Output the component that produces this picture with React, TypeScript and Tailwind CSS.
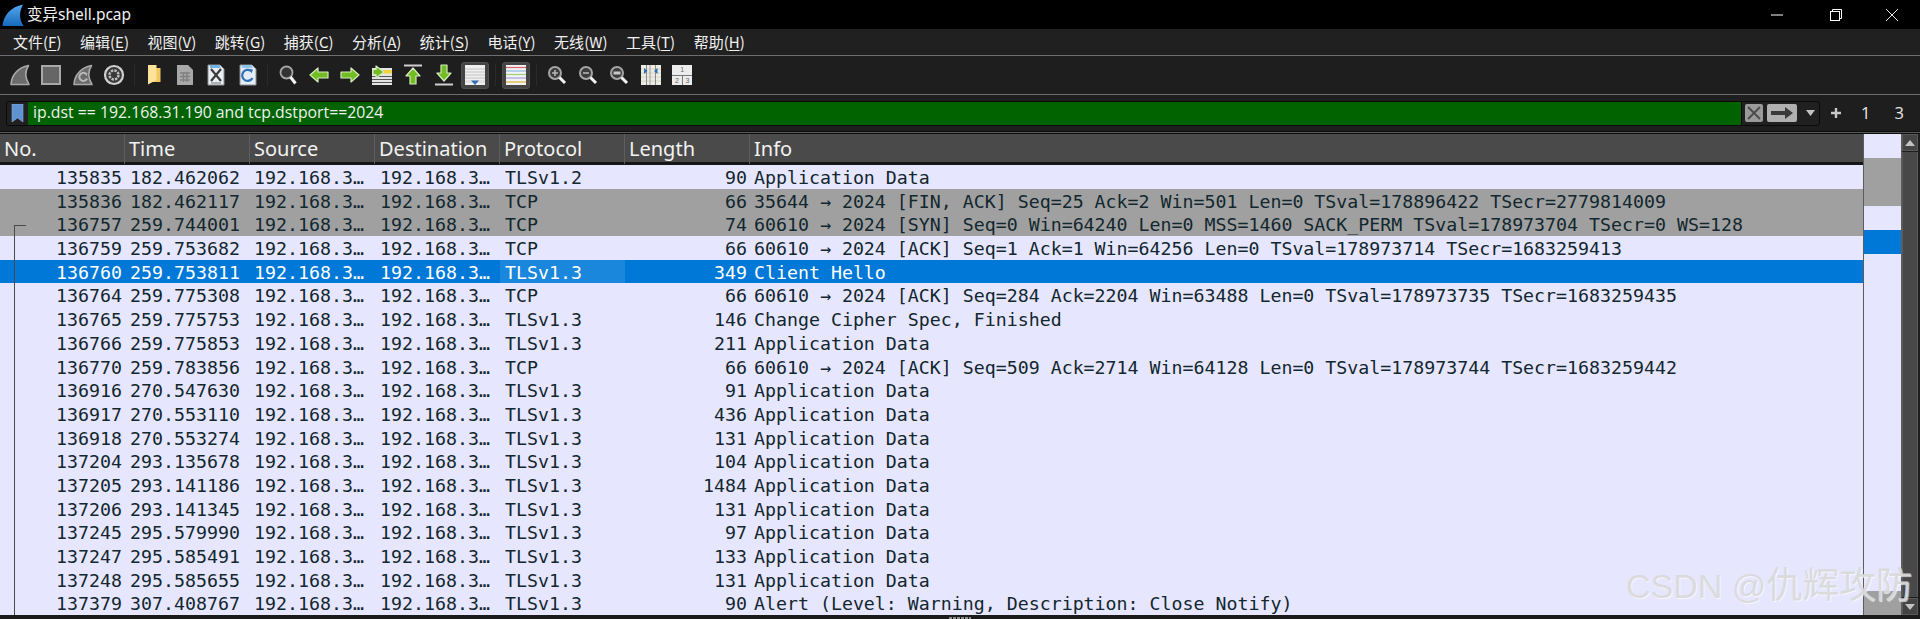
import React from 'react';

type Packet = { no: string; time: string; proto: string; len: string; info: string; tone?: 'gray' | 'selected' };

const appData = 'Application Data';

const packets: Packet[] = [
  { no: '135835', time: '182.462062', proto: 'TLSv1.2', len: '90', info: appData },
  { no: '135836', time: '182.462117', proto: 'TCP', len: '66', info: '35644 → 2024 [FIN, ACK] Seq=25 Ack=2 Win=501 Len=0 TSval=178896422 TSecr=2779814009', tone: 'gray' },
  { no: '136757', time: '259.744001', proto: 'TCP', len: '74', info: '60610 → 2024 [SYN] Seq=0 Win=64240 Len=0 MSS=1460 SACK_PERM TSval=178973704 TSecr=0 WS=128', tone: 'gray' },
  { no: '136759', time: '259.753682', proto: 'TCP', len: '66', info: '60610 → 2024 [ACK] Seq=1 Ack=1 Win=64256 Len=0 TSval=178973714 TSecr=1683259413' },
  { no: '136760', time: '259.753811', proto: 'TLSv1.3', len: '349', info: 'Client Hello', tone: 'selected' },
  { no: '136764', time: '259.775308', proto: 'TCP', len: '66', info: '60610 → 2024 [ACK] Seq=284 Ack=2204 Win=63488 Len=0 TSval=178973735 TSecr=1683259435' },
  { no: '136765', time: '259.775753', proto: 'TLSv1.3', len: '146', info: 'Change Cipher Spec, Finished' },
  { no: '136766', time: '259.775853', proto: 'TLSv1.3', len: '211', info: appData },
  { no: '136770', time: '259.783856', proto: 'TCP', len: '66', info: '60610 → 2024 [ACK] Seq=509 Ack=2714 Win=64128 Len=0 TSval=178973744 TSecr=1683259442' },
  { no: '136916', time: '270.547630', proto: 'TLSv1.3', len: '91', info: appData },
  { no: '136917', time: '270.553110', proto: 'TLSv1.3', len: '436', info: appData },
  { no: '136918', time: '270.553274', proto: 'TLSv1.3', len: '131', info: appData },
  { no: '137204', time: '293.135678', proto: 'TLSv1.3', len: '104', info: appData },
  { no: '137205', time: '293.141186', proto: 'TLSv1.3', len: '1484', info: appData },
  { no: '137206', time: '293.141345', proto: 'TLSv1.3', len: '131', info: appData },
  { no: '137245', time: '295.579990', proto: 'TLSv1.3', len: '97', info: appData },
  { no: '137247', time: '295.585491', proto: 'TLSv1.3', len: '133', info: appData },
  { no: '137248', time: '295.585655', proto: 'TLSv1.3', len: '131', info: appData },
  { no: '137379', time: '307.408767', proto: 'TLSv1.3', len: '90', info: 'Alert (Level: Warning, Description: Close Notify)' },
];

const menus = [
  ['文件', 'F'], ['编辑', 'E'], ['视图', 'V'], ['跳转', 'G'], ['捕获', 'C'], ['分析', 'A'],
  ['统计', 'S'], ['电话', 'Y'], ['无线', 'W'], ['工具', 'T'], ['帮助', 'H'],
];

const columns = ['No.', 'Time', 'Source', 'Destination', 'Protocol', 'Length', 'Info'];

const Fin = ({ fill = '#6b6b6b', stroke = '#a8a8a8', children }: { fill?: string; stroke?: string; children?: React.ReactNode }) => (
  <svg width="22" height="22" viewBox="0 0 22 22">
    <path d="M2 20.5C2.5 11 9 3.5 19.5 1.5C16 7 16 14 20 20.5Z" fill={fill} stroke={stroke} strokeWidth="1.6" strokeLinejoin="round" />
    {children}
  </svg>
);

const PageIcon = ({ children, fill = '#e8eef2' }: { children?: React.ReactNode; fill?: string }) => (
  <svg width="20" height="22" viewBox="0 0 20 22">
    <path d="M2 1H14L18 5V21H2Z" fill={fill} stroke="#8f8f8f" strokeWidth="1" />
    {children}
  </svg>
);

const Lens = ({ mark }: { mark?: 'plus' | 'minus' | 'reset' }) => (
  <svg width="20" height="20" viewBox="0 0 20 20">
    <circle cx="8" cy="8" r="6" fill="#3d3d3d" stroke="#a6a6a6" strokeWidth="2" />
    <path d="M12.5 12.5L18 18" stroke="#f2f2f2" strokeWidth="3" />
    {mark === 'plus' && <path d="M5 8H11M8 5V11" stroke="#b5b5b5" strokeWidth="1.6" />}
    {mark === 'minus' && <path d="M5 8H11" stroke="#b5b5b5" strokeWidth="1.6" />}
    {mark === 'reset' && <path d="M4.5 8H11.5" stroke="#c8c8c8" strokeWidth="3" />}
  </svg>
);

const greenArrow = { fill: '#72bd24', stroke: '#d6ecbd', strokeWidth: 1.2, strokeLinejoin: 'round' as const };

const Sep = ({ wide }: { wide?: boolean }) => (
  <div className={`h-[22px] shrink-0 bg-[linear-gradient(90deg,transparent_4px,#2a2a2a_4px,#2a2a2a_5px,transparent_5px)] ${wide ? 'w-[9.5px]' : 'w-[8.5px]'}`} />
);

const Slot = ({ children }: { children: React.ReactNode }) => (
  <div className="flex h-[30px] w-[31.3px] shrink-0 items-center justify-center">{children}</div>
);

function Toolbar() {
  return (
    <div className="flex h-[38px] items-center bg-[#1e1e1e] pl-[4.5px]">
      <Slot><Fin /></Slot>
      <Slot>
        <svg width="20" height="20" viewBox="0 0 20 20"><rect x="1" y="1" width="18" height="18" fill="#666" stroke="#a8a8a8" strokeWidth="2" /></svg>
      </Slot>
      <Slot>
        <Fin>
          <path d="M13.5 9.5a4 4 0 1 0 1.5 5" fill="none" stroke="#b8b8b8" strokeWidth="2" />
          <path d="M12 8.5l3.5 0.5l-1 3.2z" fill="#b8b8b8" />
        </Fin>
      </Slot>
      <Slot>
        <svg width="22" height="22" viewBox="0 0 22 22">
          <circle cx="11" cy="11" r="9" fill="#3a3a3a" stroke="#d0d0d0" strokeWidth="2.2" />
          <circle cx="11" cy="11" r="4.5" fill="none" stroke="#bdbdbd" strokeWidth="2.4" strokeDasharray="2.4 1.1" />
        </svg>
      </Slot>
      <Sep />
      <Slot>
        <svg width="14" height="20" viewBox="0 0 14 20">
          <rect x="3" y="3" width="10.5" height="14" fill="#f3c65e" />
          <path d="M1 0H9.5V15L1 19.5Z" fill="#fde29a" />
        </svg>
      </Slot>
      <Slot>
        <svg width="18" height="22" viewBox="0 0 18 22">
          <path d="M1 1H12L17 6V21H1Z" fill="#a8a8a8" />
          <path d="M4 9H14M4 12.5H14M4 16H14M7.5 8V18M11 8V18" stroke="#808080" strokeWidth="1.4" />
        </svg>
      </Slot>
      <Slot>
        <PageIcon>
          <path d="M4 1H13L15 4H4Z" fill="#6fb4e3" />
          <path d="M5 5L15 17M15 5L5 17" stroke="#3a3a3a" strokeWidth="2.2" />
          <path d="M5 19H15" stroke="#777" strokeWidth="1" />
        </PageIcon>
      </Slot>
      <Slot>
        <PageIcon fill="#e4edf5">
          <path d="M4 1H13L15 4H4Z" fill="#8cc4ea" />
          <path d="M14.5 14a5.5 5.5 0 1 1 -1.5 -7" fill="none" stroke="#2f6fb8" strokeWidth="2.2" />
          <path d="M10.5 5l4.5 0.5l-1.5 3.8z" fill="#2f6fb8" />
        </PageIcon>
      </Slot>
      <Sep />
      <Slot>
        <svg width="18" height="20" viewBox="0 0 18 20">
          <circle cx="7.5" cy="7.5" r="6" fill="#333" stroke="#a6a6a6" strokeWidth="1.8" />
          <path d="M11.5 12L16.5 18.5" stroke="#f2f2f2" strokeWidth="3" />
        </svg>
      </Slot>
      <Slot>
        <svg width="20" height="18" viewBox="0 0 20 18"><path d="M1 9L9 2V6H19V12H9V16Z" {...greenArrow} /></svg>
      </Slot>
      <Slot>
        <svg width="20" height="18" viewBox="0 0 20 18"><path d="M19 9L11 2V6H1V12H11V16Z" {...greenArrow} /></svg>
      </Slot>
      <Slot>
        <svg width="21" height="20" viewBox="0 0 21 20">
          <rect x="1" y="3" width="20" height="17" fill="#e4e4e4" />
          <path d="M1 11.5H21M1 14.5H21M1 17.5H21" stroke="#555" strokeWidth="1" />
          <rect x="12" y="5" width="9" height="3.5" fill="#f3d23a" />
          <path d="M2 7L10 1V4.5H13V9.5H10V13Z" transform="matrix(-1 0 0 1 15 0)" {...greenArrow} />
        </svg>
      </Slot>
      <Slot>
        <svg width="20" height="22" viewBox="0 0 20 22">
          <path d="M1 1.5H19" stroke="#cfcfcf" strokeWidth="2" />
          <path d="M10 4L17 12H13V20H7V12H3Z" {...greenArrow} />
        </svg>
      </Slot>
      <Slot>
        <svg width="20" height="22" viewBox="0 0 20 22">
          <path d="M1 20.5H19" stroke="#cfcfcf" strokeWidth="2" />
          <path d="M10 17L3 9H7V1H13V9H17Z" {...greenArrow} />
        </svg>
      </Slot>
      <Slot>
        <div className="flex h-[27px] w-[28px] items-center justify-center rounded-[3px] border border-[#505050] bg-[#444444]">
          <svg width="20" height="20" viewBox="0 0 20 20">
            <rect width="20" height="20" fill="#efefef" />
            <path d="M0 4H20M0 7H20M0 10H20M0 13H20" stroke="#c4c4c4" strokeWidth="1" />
            <rect x="0" y="15" width="20" height="3" fill="#e2e2e2" />
            <path d="M6 15.5H14L10 20Z" fill="#2f6db5" />
          </svg>
        </div>
      </Slot>
      <Sep wide />
      <Slot>
        <div className="flex h-[27px] w-[28px] items-center justify-center rounded-[3px] border border-[#505050] bg-[#444444]">
          <svg width="20" height="20" viewBox="0 0 20 20">
            <rect width="20" height="20" fill="#f2f2f2" />
            <path d="M0 2.5H20" stroke="#d9626c" strokeWidth="1.2" />
            <path d="M0 6H20" stroke="#8fb8e0" strokeWidth="1.2" />
            <path d="M0 9.5H20" stroke="#9fce7c" strokeWidth="1.2" />
            <path d="M0 13H20" stroke="#a7a0d8" strokeWidth="1.2" />
            <path d="M0 17H20" stroke="#d8b43c" strokeWidth="1.2" />
          </svg>
        </div>
      </Slot>
      <Sep wide />
      <Slot><Lens mark="plus" /></Slot>
      <Slot><Lens mark="minus" /></Slot>
      <Slot><Lens mark="reset" /></Slot>
      <Slot>
        <svg width="20" height="20" viewBox="0 0 20 20">
          <rect width="20" height="20" fill="#ecece4" />
          <path d="M0 4H20M0 8H20M0 12H20M0 16H20" stroke="#d4d4c8" strokeWidth="1" />
          <path d="M5.5 0V20M14.5 0V20" stroke="#8a8a8a" strokeWidth="1" />
          <path d="M3 3L6.5 6L3 9Z" fill="#2f6db5" />
          <path d="M16.5 3L13 6L16.5 9Z" fill="#2f6db5" />
          <path d="M9 0V20" stroke="#8a8a8a" strokeWidth="0.8" />
        </svg>
      </Slot>
      <Slot>
        <div className="grid h-[20px] w-[20px] grid-cols-2 grid-rows-2 gap-px bg-[#777777] font-['Liberation_Sans',sans-serif] text-[7px] leading-[10px] text-[#666666]">
          <span className="col-span-2 bg-[#ececec] text-center">1</span>
          <span className="bg-[#ececec] text-center">2</span>
          <span className="bg-[#ececec] text-center">3</span>
        </div>
      </Slot>
    </div>
  );
}

function FilterBar() {
  return (
    <div className="flex h-[36px] items-center bg-[#1e1e1e] pl-[6px] pr-[12px]">
      <div className="flex h-[25px] min-w-0 flex-1 items-stretch rounded-[3px] border border-[#0a0a0a] bg-[#202020]">
        <div className="flex w-[21px] shrink-0 items-center justify-center">
          <svg width="13" height="19" viewBox="0 0 13 19"><path d="M1 0H12V18L6.5 14L1 18Z" fill="#5f93cf" stroke="#86b0de" strokeWidth="0.6" /></svg>
        </div>
        <div className="flex min-w-0 flex-1 items-center border-r border-[#0a0a0a] bg-[#006300] pl-[5px] font-['Open_Sans',sans-serif] text-[15.8px] text-[#f0f0f0]">
          ip.dst == 192.168.31.190 and tcp.dstport==2024
        </div>
        <div className="flex w-[77px] shrink-0 items-center pl-[3px]">
          <div className="flex h-[18px] w-[18px] items-center justify-center rounded-[2px] bg-[#9a9a9a]">
            <svg width="14" height="14" viewBox="0 0 14 14"><path d="M1 1L13 13M13 1L1 13" stroke="#4a4a4a" strokeWidth="1.8" /></svg>
          </div>
          <div className="ml-[4px] flex h-[18px] w-[30px] items-center justify-center rounded-[2px] bg-[#b0b0b0]">
            <svg width="22" height="12" viewBox="0 0 22 12"><path d="M0 4H14V0L22 6L14 12V8H0Z" fill="#3a3a3a" /></svg>
          </div>
          <svg className="ml-[9px]" width="9" height="6" viewBox="0 0 9 6"><path d="M0 0H9L4.5 6Z" fill="#c4c4c4" /></svg>
        </div>
      </div>
      <div className="flex w-[88px] shrink-0 items-center font-['Open_Sans',sans-serif] text-[16.5px] text-[#e8e8e8]">
        <svg className="ml-[11px]" width="10" height="10" viewBox="0 0 10 10"><path d="M0 5H10M5 0V10" stroke="#c8c8c8" strokeWidth="2.4" /></svg>
        <span className="ml-[20px]">1</span>
        <span className="ml-[24px]">3</span>
      </div>
    </div>
  );
}

function PacketRow({ p }: { p: Packet }) {
  const tone =
    p.tone === 'selected'
      ? 'bg-[#0078d7] text-white'
      : p.tone === 'gray'
        ? 'bg-[#a0a0a0] text-[#12272e]'
        : 'bg-[#e7e6ff] text-[#12272e]';
  return (
    <div className={`grid h-[23.7px] grid-cols-[125px_125px_125px_125px_125px_125px_1fr] grid-rows-[23.7px] whitespace-nowrap leading-[25.7px] ${tone}`}>
      <span className="pr-[3px] text-right">{p.no}</span>
      <span className="pl-[5px]">{p.time}</span>
      <span className="pl-[4px]">192.168.3…</span>
      <span className="pl-[5px]">192.168.3…</span>
      <span className={`pl-[5px] ${p.tone === 'selected' ? 'bg-[#1a86dc]' : ''}`}>{p.proto}</span>
      <span className="pr-[3px] text-right">{p.len}</span>
      <span className="pl-[4px]">{p.info}</span>
    </div>
  );
}

export default function App() {
  return (
    <div className="relative h-[619px] w-[1920px] overflow-hidden bg-[#1e1e1e] font-['Noto_Sans','Noto_Sans_CJK_SC',sans-serif]">
      {/* title bar */}
      <div className="flex h-[29px] items-center bg-black pl-[2px] text-white">
        <svg width="22" height="24" viewBox="0 0 22 24">
          <defs>
            <linearGradient id="titleFin" x1="0" y1="0" x2="0" y2="1">
              <stop offset="0" stopColor="#55a8ee" />
              <stop offset="1" stopColor="#1769bd" />
            </linearGradient>
          </defs>
          <path d="M0.5 23C1.5 12 9 4 21 1.5C17 9 17 16 21.5 23Z" fill="url(#titleFin)" />
        </svg>
        <span className="ml-[3px] text-[15.5px] text-[#f0f0f0]">变异shell.pcap</span>
        <div className="ml-auto flex items-center">
          <div className="flex h-[29px] w-[58px] items-center justify-center">
            <svg width="12" height="2" viewBox="0 0 12 2"><path d="M0 1H12" stroke="#fff" strokeWidth="1" /></svg>
          </div>
          <div className="flex h-[29px] w-[59px] items-center justify-center">
            <svg width="12" height="12" viewBox="0 0 12 12" fill="none" stroke="#fff"><rect x="0.5" y="2.5" width="9" height="9" /><path d="M2.5 2.5V0.5H11.5V9.5H9.5" /></svg>
          </div>
          <div className="flex h-[29px] w-[55px] items-center justify-center pr-[2px]">
            <svg width="12" height="12" viewBox="0 0 12 12"><path d="M0 0L12 12M12 0L0 12" stroke="#e8e8e8" strokeWidth="1" /></svg>
          </div>
        </div>
      </div>

      {/* menu */}
      <div className="flex h-[26px] items-center gap-[18.5px] bg-[#202020] pl-[13px] font-['Noto_Sans_CJK_SC','Noto_Sans',sans-serif] text-[15px] text-[#f0f0f0]">
        {menus.map(([label, key]) => (
          <span key={key} className="whitespace-nowrap">
            {label}(<span className="underline underline-offset-2">{key}</span>)
          </span>
        ))}
      </div>
      <div className="h-px bg-[#6e6e6e]" />

      <Toolbar />
      <div className="h-px bg-[#6e6e6e]" />

      <FilterBar />
      <div className="h-[3px] border-t border-b border-t-[#0c0c0c] border-b-[#0c0c0c] bg-[#5a5a5a]" />

      {/* packet list */}
      <div className="flex h-[481px] items-stretch">
        <div className="relative flex min-w-0 w-[1863px] shrink-0 flex-col overflow-hidden">
          <div className="grid h-[31px] shrink-0 grid-cols-[125px_125px_125px_125px_125px_125px_1fr] border-b-[3px] border-b-[#161616] bg-[#4a4a4a] text-[20px] leading-[30px] text-[#f2f2f2]">
            {columns.map(c => (
              <div key={c} className="border-r border-r-[#5e5e5e] pl-[4px] last:border-r-0">{c}</div>
            ))}
          </div>
          <div className="h-[450px] font-['DejaVu_Sans_Mono',monospace] text-[18.25px]">
            {packets.map(p => (
              <PacketRow key={p.no} p={p} />
            ))}
          </div>
          {/* related packet bracket */}
          <div className="absolute bottom-0 left-[14px] top-[91px] w-[12px] border-l border-t border-l-[#4a4a4a] border-t-[#4a4a4a]" />
        </div>

        {/* packet map */}
        <div className="flex w-[39px] shrink-0 flex-col border-x border-x-[#5c5c5c] bg-[#e7e6ff]">
          <div className="h-[24px]" />
          <div className="h-[48px] bg-[#a0a0a0]" />
          <div className="h-[24px]" />
          <div className="h-[24px] bg-[#0078d7]" />
          <div className="flex-1" />
          <div className="h-[24px] bg-[#a0a0a0]" />
        </div>

        {/* scrollbar */}
        <div className="flex w-[18px] shrink-0 flex-col pr-[2px]">
          <div className="flex h-[17px] items-center justify-center border border-[#5a5a5a] bg-[#444444]">
            <svg width="10" height="6" viewBox="0 0 10 6"><path d="M0 6L5 0L10 6Z" fill="#c4c4c4" /></svg>
          </div>
          <div className="my-px flex-1 border-x border-[#5a5a5a] bg-[#484848]" />
          <div className="flex h-[17px] items-center justify-center border border-[#5a5a5a] bg-[#444444]">
            <svg width="10" height="6" viewBox="0 0 10 6"><path d="M0 0L5 6L10 0Z" fill="#c4c4c4" /></svg>
          </div>
        </div>
      </div>

      {/* splitter handle */}
      <div className="flex h-[5px] items-end justify-center bg-[#1b1b1b]">
        <div className="mb-[1px] h-[2px] w-[22px] bg-[repeating-linear-gradient(90deg,#8a8a8a_0,#8a8a8a_3px,transparent_3px,transparent_4px)]" />
      </div>

      {/* CSDN watermark */}
      <div className="absolute left-[1626px] top-[564px] whitespace-nowrap font-['Liberation_Sans','Noto_Sans_CJK_SC',sans-serif] text-[34px] leading-[44px] text-[#d8d8d8]/90 [text-shadow:1px_1px_1px_rgba(255,255,255,0.7)]">
        CSDN @<span className="text-[36.5px]">仇辉攻防</span>
      </div>
    </div>
  );
}
